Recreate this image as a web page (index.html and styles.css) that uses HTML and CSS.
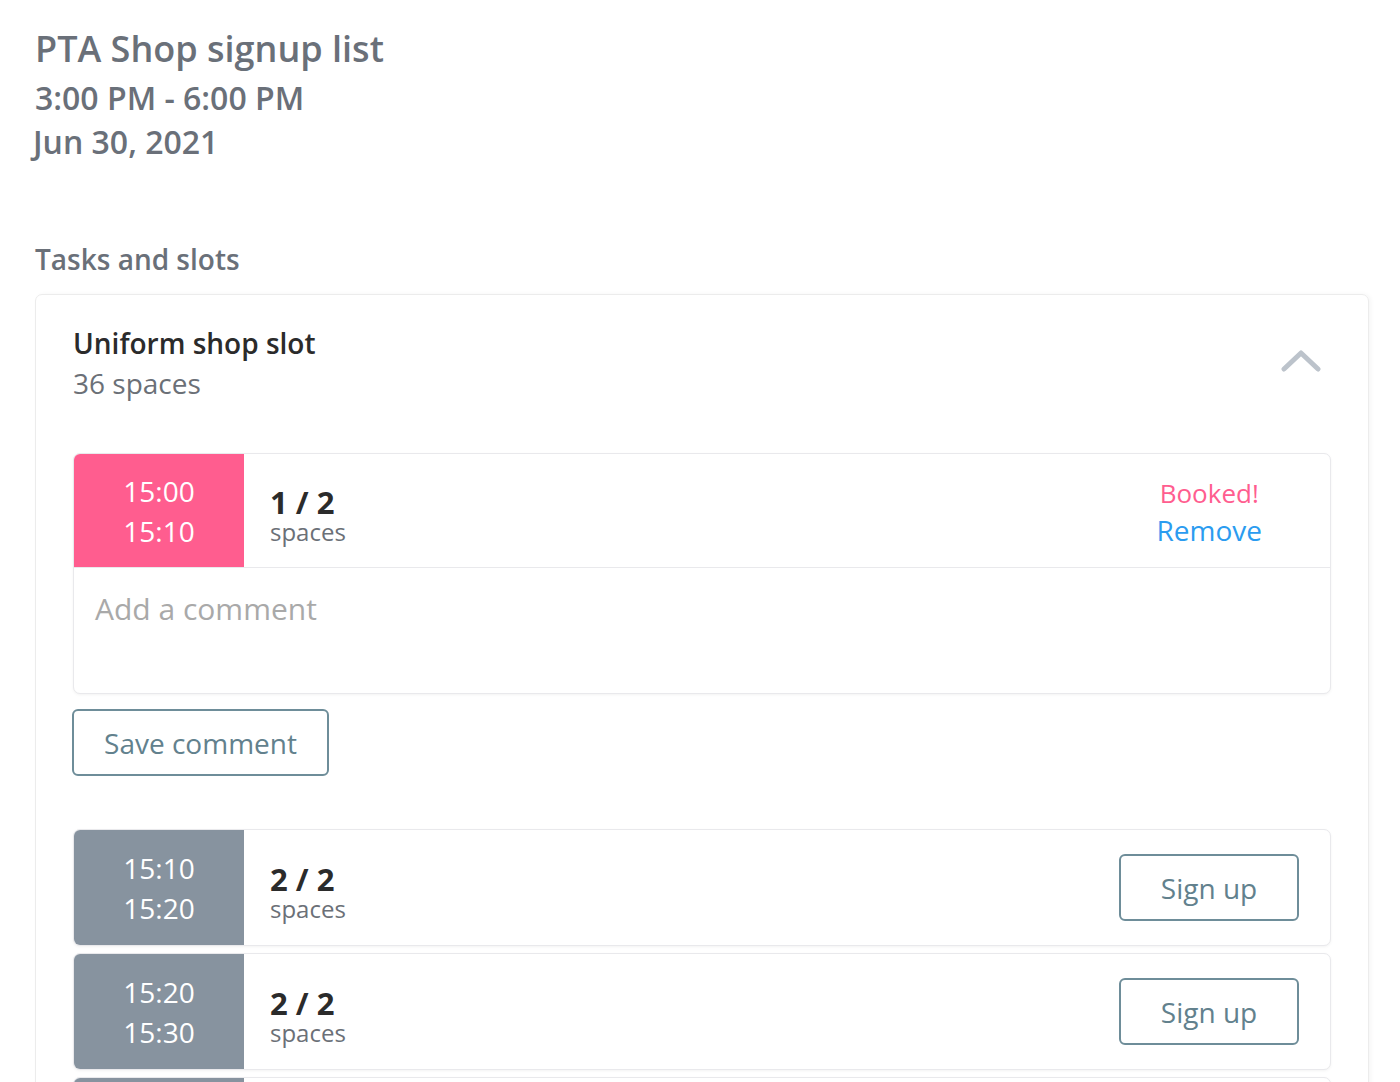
FILE: index.html
```html
<!DOCTYPE html>
<html lang="en">
<head>
<meta charset="utf-8">
<title>PTA Shop signup list</title>
<link rel="stylesheet" href="styles.css">
</head>
<body>
<div class="page">
  <header class="event">
    <h1 class="event-title">PTA Shop signup list</h1>
    <div class="event-time">3:00 PM - 6:00 PM</div>
    <div class="event-date">Jun 30, 2021</div>
  </header>

  <h2 class="section-title">Tasks and slots</h2>

  <section class="card">
    <div class="card-head">
      <div>
        <div class="task-name">Uniform shop slot</div>
        <div class="task-spaces">36 spaces</div>
      </div>
      <svg class="chevron" width="40" height="24" viewBox="0 0 40 24" aria-hidden="true">
        <path d="M3 20 L20 4 L37 20" fill="none" stroke="#bcc3cb" stroke-width="5" stroke-linecap="round" stroke-linejoin="round"/>
      </svg>
    </div>

    <div class="slot slot-booked">
      <div class="slot-row">
        <div class="slot-time pink"><span>15:00</span><span>15:10</span></div>
        <div class="slot-count"><strong>1 / 2</strong><span>spaces</span></div>
        <div class="slot-action booked-action">
          <span class="booked">Booked!</span>
          <a class="remove" href="#">Remove</a>
        </div>
      </div>
      <div class="comment">Add a comment</div>
    </div>
    <button class="btn save">Save comment</button>

    <div class="slot-list">
      <div class="slot">
        <div class="slot-row">
          <div class="slot-time grey"><span>15:10</span><span>15:20</span></div>
          <div class="slot-count"><strong>2 / 2</strong><span>spaces</span></div>
          <div class="slot-action"><button class="btn signup">Sign up</button></div>
        </div>
      </div>
      <div class="slot">
        <div class="slot-row">
          <div class="slot-time grey"><span>15:20</span><span>15:30</span></div>
          <div class="slot-count"><strong>2 / 2</strong><span>spaces</span></div>
          <div class="slot-action"><button class="btn signup">Sign up</button></div>
        </div>
      </div>
      <div class="slot">
        <div class="slot-row">
          <div class="slot-time grey"><span>15:30</span><span>15:40</span></div>
          <div class="slot-count"><strong>2 / 2</strong><span>spaces</span></div>
          <div class="slot-action"><button class="btn signup">Sign up</button></div>
        </div>
      </div>
    </div>
  </section>
</div>
</body>
</html>
```

FILE: styles.css
```css
* { box-sizing: border-box; }
html, body { margin: 0; padding: 0; background: #fff; }
body {
  font-family: "Open Sans", "Liberation Sans", sans-serif;
  color: #6b7077;
  overflow: hidden;
  height: 1082px;
}
.page { padding: 24px 31px 0 35px; }

.event-title {
  margin: 0;
  font-size: 36px;
  font-weight: 600;
  line-height: 50px;
  color: #6a7079;
}
.event-time, .event-date {
  font-size: 32px;
  font-weight: 600;
  line-height: 44px;
  color: #6a7079;
}
.event-time { margin-top: 2px; }
.event-date { margin-left: -2px; }

.section-title {
  margin: 75px 0 0;
  font-size: 28px;
  font-weight: 600;
  line-height: 40px;
  color: #6a7079;
}

.card {
  margin-top: 15px;
  border: 1px solid #ececec;
  border-radius: 7px;
  box-shadow: 2px 0 4px rgba(0,0,0,0.04);
  padding: 28px 37px 0 37px;
  height: 800px;
}
.card-head {
  display: flex;
  justify-content: space-between;
  align-items: flex-start;
  padding-right: 10px;
}
.task-name {
  font-size: 28px;
  font-weight: 600;
  line-height: 40px;
  color: #2b2b2b;
}
.task-spaces {
  font-size: 28px;
  line-height: 40px;
  color: #6b7077;
}
.chevron { margin-top: 26px; }

.slot {
  border: 1px solid #e9e9ec;
  border-radius: 7px;
  box-shadow: 0 1px 3px rgba(0,0,0,0.05);
  overflow: hidden;
  background: #fff;
}
.slot-booked { margin-top: 50px; }
.slot-row {
  display: flex;
  align-items: center;
  height: 113px;
}
.slot-time {
  width: 170px;
  height: 100%;
  display: flex;
  flex-direction: column;
  justify-content: center;
  align-items: center;
  color: #fff;
  font-size: 28px;
  line-height: 40px;
}
.slot-time.pink { background: #ff5d8f; }
.slot-time.grey { background: #87939f; }

.slot-count {
  display: flex;
  flex-direction: column;
  padding-left: 26px;
  padding-top: 10px;
}
.slot-count strong {
  font-size: 31px;
  font-weight: 700;
  line-height: 32px;
  color: #2b2b2b;
}
.slot-count span {
  font-size: 24px;
  line-height: 28px;
  color: #6b7077;
}
.slot-action {
  margin-left: auto;
  padding-right: 31px;
  display: flex;
  flex-direction: column;
  align-items: center;
}
.booked-action { padding-right: 68px; padding-top: 2px; }
.booked {
  font-size: 26px;
  line-height: 36px;
  color: #ff5d8f;
}
.remove {
  font-size: 28px;
  line-height: 38px;
  color: #2b9cf0;
  text-decoration: none;
}

.comment {
  border-top: 1px solid #e9e9ec;
  height: 126px;
  padding: 20px 21px;
  font-size: 30px;
  line-height: 42px;
  color: #a9a9a9;
}

.btn {
  font-family: "Open Sans", "Liberation Sans", sans-serif;
  background: #fff;
  border: 2px solid #6e8d99;
  border-radius: 6px;
  color: #62818d;
  font-size: 28px;
  cursor: pointer;
}
.save {
  margin-top: 15px;
  margin-left: -1px;
  width: 257px;
  height: 67px;
  padding: 0;
}
.slot-list {
  margin-top: 53px;
  display: flex;
  flex-direction: column;
  gap: 7px;
}
.slot-list .slot-row { height: 115px; }
.signup {
  width: 180px;
  height: 67px;
  padding: 0;
}
```
